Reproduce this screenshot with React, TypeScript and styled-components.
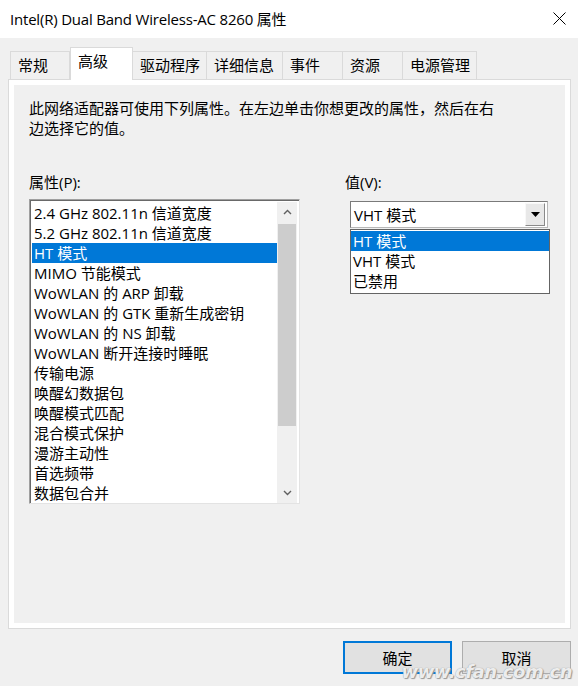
import React from "react";
import styled, { createGlobalStyle } from "styled-components";

const GlobalStyle = createGlobalStyle`
  html, body {
    margin: 0;
    padding: 0;
    background: #f0f0f0;
  }
  body {
    font-family: "Open Sans", "Noto Sans CJK SC", sans-serif;
    font-size: 15px;
    color: #000;
  }
`;

const Window = styled.div`
  width: 578px;
  height: 686px;
  display: flex;
  flex-direction: column;
  background: #f0f0f0;
  position: relative;
  overflow: hidden;
`;

const TitleBar = styled.div`
  height: 38px;
  background: #fff;
  display: flex;
  align-items: center;
  justify-content: space-between;
  padding: 0 12px 2px 10px;
  box-sizing: border-box;
  flex-shrink: 0;
`;

const Title = styled.span`
  font-size: 15px;
  letter-spacing: -0.2px;
`;

const Body = styled.div`
  flex: 1;
  display: flex;
  flex-direction: column;
  padding: 10px 7px 0 8px;
`;

const TabRow = styled.div`
  display: flex;
  align-items: flex-end;
  height: 32px;
  padding-left: 2px;
  position: relative;
  z-index: 1;
  margin-bottom: -1px;
`;

const Tab = styled.div<{ $w: number; $active?: boolean }>`
  width: ${(p) => p.$w}px;
  height: ${(p) => (p.$active ? 33 : 29)}px;
  box-sizing: border-box;
  padding-left: 7px;
  display: flex;
  align-items: center;
  background: ${(p) => (p.$active ? "#fff" : "#f0f0f0")};
  border: 1px solid #dadada;
  border-bottom: ${(p) => (p.$active ? "none" : "1px solid #dadada")};
  border-left: ${(p) => (p.$active ? "1px solid #dadada" : "none")};
  padding-bottom: ${(p) => (p.$active ? 7 : 3)}px;
  &:first-child {
    border-left: 1px solid #dadada;
  }
`;

const Panel = styled.div`
  height: 550px;
  box-sizing: border-box;
  border: 1px solid #dadada;
  box-shadow: inset 0 0 0 5px #fff;
  padding: 18px 20px 0 20px;
`;

const Description = styled.p`
  margin: 0;
  line-height: 20px;
`;

const Columns = styled.div`
  display: flex;
  margin-top: 34px;
`;

const LeftCol = styled.div`
  width: 271px;
  display: flex;
  flex-direction: column;
`;

const RightCol = styled.div`
  margin-left: 45px;
  display: flex;
  flex-direction: column;
`;

const Label = styled.div`
  line-height: 20px;
`;

const ListBox = styled.div`
  margin-top: 7px;
  height: 305px;
  box-sizing: border-box;
  background: #fff;
  border: 1px solid;
  border-color: #a0a0a0 #e3e3e3 #e3e3e3 #a0a0a0;
  box-shadow: inset 1px 1px 0 #696969;
  display: flex;
  padding: 3px 2px 0 2px;
`;

const Items = styled.div`
  flex: 1;
  display: flex;
  flex-direction: column;
`;

const Item = styled.div<{ $selected?: boolean }>`
  height: 20px;
  line-height: 20px;
  padding-left: 2px;
  white-space: nowrap;
  background: ${(p) => (p.$selected ? "#0078d7" : "transparent")};
  color: ${(p) => (p.$selected ? "#fff" : "#000")};
`;

const ScrollBar = styled.div`
  width: 20px;
  margin-top: -1px;
  background: #f0f0f0;
  display: flex;
  flex-direction: column;
  align-items: stretch;
`;

const ScrollArrow = styled.div`
  height: 20px;
  display: flex;
  align-items: center;
  justify-content: center;
`;

const ScrollTrack = styled.div`
  flex: 1;
  display: flex;
  flex-direction: column;
  padding: 2px 1px;
`;

const Thumb = styled.div`
  height: 202px;
  background: #cdcdcd;
`;

const Combo = styled.div`
  margin-top: 9px;
  margin-left: 5px;
  width: 198px;
  height: 27px;
  box-sizing: border-box;
  background: #fff;
  border: 1px solid;
  border-color: #7a7a7a #b8b8b8 #b8b8b8 #7a7a7a;
  display: flex;
  align-items: center;
  padding: 0 2px 0 3px;
`;

const ComboText = styled.span`
  flex: 1;
`;

const ComboButton = styled.div`
  width: 20px;
  height: 23px;
  box-sizing: border-box;
  background: #e8e8e8;
  border: 1px solid;
  border-color: #f8f8f8 #8a8a8a #8a8a8a #f8f8f8;
  display: flex;
  align-items: center;
  justify-content: center;
`;

const DropList = styled.div`
  margin-left: 5px;
  margin-top: 1px;
  width: 200px;
  box-sizing: border-box;
  background: #fff;
  border: 1px solid #646464;
  padding: 1px 0 2px;
`;

const Footer = styled.div`
  display: flex;
  justify-content: flex-end;
  gap: 10px;
  padding-top: 12px;
`;

const Button = styled.button<{ $primary?: boolean }>`
  width: 109px;
  height: 33px;
  box-sizing: border-box;
  background: #e1e1e1;
  border: ${(p) => (p.$primary ? "2px solid #0078d7" : "1px solid #adadad")};
  font-family: inherit;
  font-size: 15px;
  color: #000;
  padding: 0;
`;

const Watermark = styled.div`
  position: absolute;
  right: 6px;
  bottom: 4px;
  font-family: "DejaVu Sans", sans-serif;
  font-style: italic;
  font-weight: bold;
  font-size: 18px;
  letter-spacing: -0.5px;
  color: rgba(255, 255, 255, 0.85);
  text-shadow: 0 0 1px #8a8a8a, 1px 1px 1px #9a9a9a;
  pointer-events: none;
`;

const TABS = [
  { label: "常规", w: 60 },
  { label: "高级", w: 63, active: true },
  { label: "驱动程序", w: 74 },
  { label: "详细信息", w: 76 },
  { label: "事件", w: 60 },
  { label: "资源", w: 60 },
  { label: "电源管理", w: 74 },
];

const PROPS = [
  "2.4 GHz 802.11n 信道宽度",
  "5.2 GHz 802.11n 信道宽度",
  "HT 模式",
  "MIMO 节能模式",
  "WoWLAN 的 ARP 卸载",
  "WoWLAN 的 GTK 重新生成密钥",
  "WoWLAN 的 NS 卸载",
  "WoWLAN 断开连接时睡眠",
  "传输电源",
  "唤醒幻数据包",
  "唤醒模式匹配",
  "混合模式保护",
  "漫游主动性",
  "首选频带",
  "数据包合并",
];

const VALUES = ["HT 模式", "VHT 模式", "已禁用"];

const Chevron = ({ up }: { up?: boolean }) => (
  <svg width="9" height="6" viewBox="0 0 9 6">
    <path
      d={up ? "M1 5 L4.5 1.5 L8 5" : "M1 1 L4.5 4.5 L8 1"}
      fill="none"
      stroke="#606060"
      strokeWidth="1.4"
    />
  </svg>
);

const App = () => {
  return (
    <Window>
      <GlobalStyle />
      <TitleBar>
        <Title>Intel(R) Dual Band Wireless-AC 8260 属性</Title>
        <svg width="13" height="13" viewBox="0 0 13 13">
          <path d="M0.5 0.5 L12.5 12.5 M12.5 0.5 L0.5 12.5" stroke="#000" strokeWidth="1" />
        </svg>
      </TitleBar>
      <Body>
        <TabRow>
          {TABS.map((t) => (
            <Tab key={t.label} $w={t.w} $active={t.active}>
              {t.label}
            </Tab>
          ))}
        </TabRow>
        <Panel>
          <Description>
            此网络适配器可使用下列属性。在左边单击你想更改的属性，然后在右
            <br />
            边选择它的值。
          </Description>
          <Columns>
            <LeftCol>
              <Label>属性(P):</Label>
              <ListBox>
                <Items>
                  {PROPS.map((p, i) => (
                    <Item key={p} $selected={i === 2}>
                      {p}
                    </Item>
                  ))}
                </Items>
                <ScrollBar>
                  <ScrollArrow>
                    <Chevron up />
                  </ScrollArrow>
                  <ScrollTrack>
                    <Thumb />
                  </ScrollTrack>
                  <ScrollArrow>
                    <Chevron />
                  </ScrollArrow>
                </ScrollBar>
              </ListBox>
            </LeftCol>
            <RightCol>
              <Label>值(V):</Label>
              <Combo>
                <ComboText>VHT 模式</ComboText>
                <ComboButton>
                  <svg width="9" height="5" viewBox="0 0 9 5">
                    <path d="M0 0 H9 L4.5 5 Z" fill="#000" />
                  </svg>
                </ComboButton>
              </Combo>
              <DropList>
                {VALUES.map((v, i) => (
                  <Item key={v} $selected={i === 0}>
                    {v}
                  </Item>
                ))}
              </DropList>
            </RightCol>
          </Columns>
        </Panel>
        <Footer>
          <Button $primary>确定</Button>
          <Button>取消</Button>
        </Footer>
      </Body>
      <Watermark>www.cfan.com.cn</Watermark>
    </Window>
  );
};

export default App;
